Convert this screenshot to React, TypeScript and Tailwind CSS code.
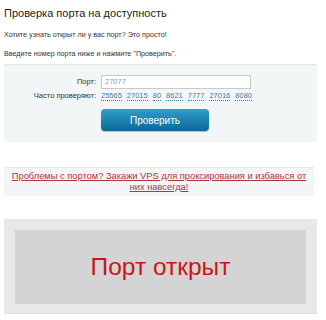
import React from 'react';

// popular ports shown under the input
const popularPorts = ['25565', '27015', '80', '8621', '7777', '27016', '8080'];

export default function App() {
  return (
    <div className="w-[326px] h-[320px] bg-white overflow-hidden text-[#333] font-['Liberation_Sans',Arial,sans-serif]">
      <div className="px-[4px] pt-[6px]">
        <h1 className="text-[11px] leading-[15px] text-[#222]">Проверка порта на доступность</h1>
        <p className="mt-[9px] text-[7.2px] leading-[10px] text-[#333]">Хотите узнать открыт ли у вас порт? Это просто!</p>
        <p className="mt-[9px] text-[7.2px] leading-[10px] text-[#333]">Введите номер порта ниже и нажмите "Проверить".</p>

        {/* check form */}
        <div className="mt-[5px] w-[313px] h-[78px] bg-[#f3f6f7] border-t border-[#e2e6e8] pt-[10px]">
          <div className="flex items-center">
            <span className="w-[97px] pr-[5px] text-right text-[7.5px] text-[#333]">Порт:</span>
            <div className="w-[150px] h-[14px] bg-white border border-[#c9c9c9] flex items-center px-[3px] text-[7.5px] text-[#999]">27077</div>
          </div>
          <div className="flex items-center mt-[1px] h-[12px]">
            <span className="w-[97px] pr-[5px] text-right text-[7.5px] text-[#333]">Часто проверяют:</span>
            <div className="flex gap-[5px] text-[7.5px] text-[#4a7b9d]">
              {popularPorts.map((p) => (
                <span key={p} className="border-b border-dotted border-[#4a7b9d] leading-[9px]">{p}</span>
              ))}
            </div>
          </div>
          <div className="ml-[97px] mt-[7px] w-[108px] h-[22px] rounded-[4px] bg-gradient-to-b from-[#2ea0cc] to-[#0b6797] flex items-center justify-center text-white text-[10px] shadow-[0_1px_1px_rgba(0,0,0,0.25)]">
            Проверить
          </div>
        </div>

        {/* vps promo */}
        <div className="mt-[25px] w-[310px] h-[29px] bg-[#f3f5f6] border-t border-[#e6e9eb] flex items-center justify-center text-center px-[6px]">
          <a className="text-[9.3px] leading-[11px] text-[#b0363c] underline">Проблемы с портом? Закажи VPS для проксирования и избавься от них навсегда!</a>
        </div>

        {/* result */}
        <div className="mt-[23px] w-[313px] h-[95px] bg-[#e8e8e8] border-b border-[#dcdcdc] px-[11px] pt-[11px]">
          <div className="h-[74px] bg-[#d4d4d4] flex items-center justify-center">
            <span className="text-[24.5px] text-[#cc1414]">Порт открыт</span>
          </div>
        </div>
      </div>
    </div>
  );
}
